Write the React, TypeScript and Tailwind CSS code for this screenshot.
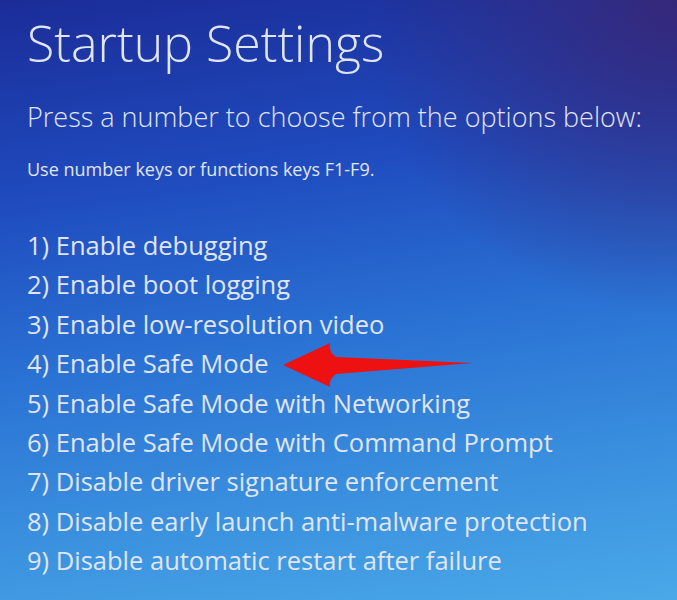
const items = [
  "1) Enable debugging",
  "2) Enable boot logging",
  "3) Enable low-resolution video",
  "4) Enable Safe Mode",
  "5) Enable Safe Mode with Networking",
  "6) Enable Safe Mode with Command Prompt",
  "7) Disable driver signature enforcement",
  "8) Disable early launch anti-malware protection",
  "9) Disable automatic restart after failure",
];

// red pointer drawn over the list, pointing at option 4
function Arrow() {
  return (
    <svg
      className="absolute left-[278px] top-[338px]"
      width="200"
      height="54"
      viewBox="0 0 200 54"
    >
      <path
        d="M5 27 L52 5 Q50 14 58 19 L194 25 L58 36 Q50 42 52 49 Z"
        fill="#ee1111"
      />
    </svg>
  );
}

export default function App() {
  return (
    <div className="relative h-[600px] w-[677px] overflow-hidden bg-[radial-gradient(circle_at_100%_0%,#35287a_0%,transparent_35%),linear-gradient(172deg,#1b2c98_0%,#1f4cbf_30%,#2a72d4_55%,#3b92df_80%,#4aa8e8_100%)] font-['Open_Sans',sans-serif] text-[#e0e5f0]">
      <div className="flex flex-col pl-[27px] pt-[13px]">
        <h1 className="text-[50px] font-light leading-[60px]">Startup Settings</h1>
        <p className="mt-[26px] text-[27px] font-light leading-[36px]">
          Press a number to choose from the options below:
        </p>
        <p className="mt-[22px] text-[18px] leading-[24px]">
          Use number keys or functions keys F1-F9.
        </p>
        <ul className="mt-[45px] flex flex-col">
          {items.map((t) => (
            <li key={t} className="text-[25.5px] font-normal leading-[39.4px]">
              {t}
            </li>
          ))}
        </ul>
      </div>
      <Arrow />
    </div>
  );
}
